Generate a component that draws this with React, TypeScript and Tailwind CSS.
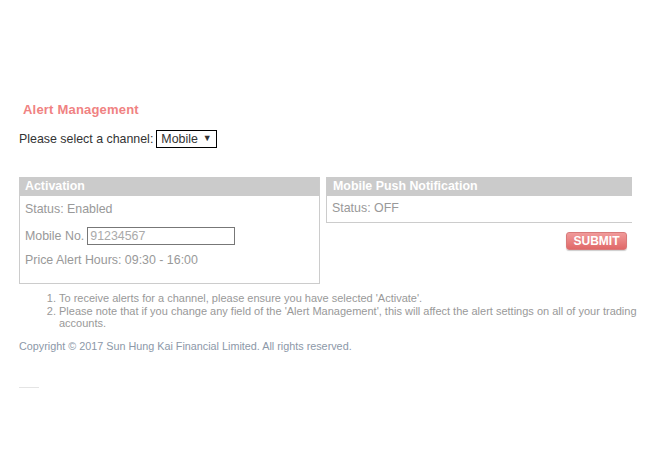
import React from "react";

export default function App() {
  return (
    <div className="w-[650px] h-[462px] bg-white font-['Liberation_Sans',Arial,sans-serif] text-[12.4px] text-[#333] pt-[101px] pl-[19px]">
      <h1 className="pl-[4px] text-[13px] font-bold text-[#f08282] leading-[17px] tracking-[0.2px]">Alert Management</h1>

      <div className="mt-[12px] flex items-center h-[18px]">
        <span className="mr-[3px]">Please select a channel:</span>
        <div className="flex items-center h-[18px] border border-black px-[4px] gap-[5px]">
          <span>Mobile</span>
          <span className="text-[9px]">▼</span>
        </div>
      </div>

      <div className="mt-[29px] flex items-start gap-[6px]">
        <div className="w-[301px] h-[107px] border border-[#ccc] border-t-0">
          <div className="h-[19px] bg-[#cbcbcb] text-white font-bold pl-[5px] leading-[19px]">Activation</div>
          <div className="pl-[5px] text-[#999]">
            <div className="mt-[6px] leading-[14px]">Status: Enabled</div>
            <div className="mt-[11px] flex items-center h-[18px]">
              <span className="mr-[3px]">Mobile No.</span>
              <div className="w-[148px] h-[18px] border border-[#777] pl-[2px] leading-[16px] text-[#aaa]">91234567</div>
            </div>
            <div className="mt-[8px] leading-[14px]">Price Alert Hours: 09:30 - 16:00</div>
          </div>
        </div>

        <div className="w-[306px] flex flex-col">
          <div className="h-[46px] border-l border-b border-[#ccc]">
            <div className="h-[19px] bg-[#cbcbcb] text-white font-bold pl-[6px] leading-[19px]">Mobile Push Notification</div>
            <div className="pl-[5px] pt-[5px] text-[#999] leading-[14px]">Status: OFF</div>
          </div>
          <div className="flex justify-end pr-[5px] mt-[9px]">
            <button className="w-[61px] h-[18px] rounded-[3px] bg-gradient-to-b from-[#f09a9a] to-[#e06868] border border-[#d87a7a] text-white text-[12px] font-bold leading-[16px] shadow-[0_1px_1px_rgba(0,0,0,0.2)]">
              SUBMIT
            </button>
          </div>
        </div>
      </div>

      <ol className="mt-[8px] pl-[40px] text-[11px] leading-[12.5px] text-[#999] list-decimal">
        <li>To receive alerts for a channel, please ensure you have selected 'Activate'.</li>
        <li>Please note that if you change any field of the 'Alert Management', this will affect the alert settings on all of your trading accounts.</li>
      </ol>

      <p className="mt-[10px] text-[10.8px] leading-[13px] text-[#8c98a8]">
        Copyright © 2017 Sun Hung Kai Financial Limited. All rights reserved.
      </p>

      <div className="mt-[34px] w-[20px] border-t border-[#e4e4e4]"></div>
    </div>
  );
}
